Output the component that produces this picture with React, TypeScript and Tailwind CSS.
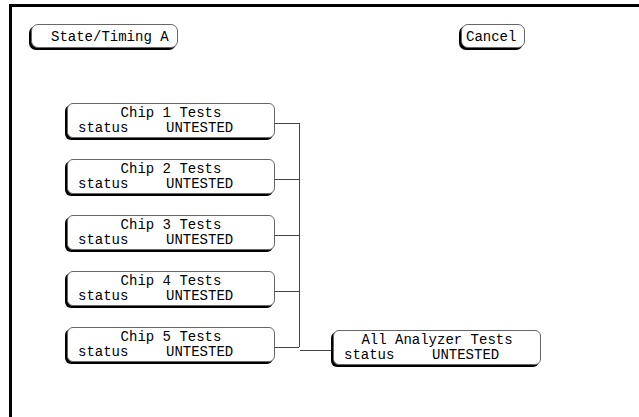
const chips = [1, 2, 3, 4, 5];

function TestBox({ title }: { title: string }) {
    return (
        <div className="w-[208px] h-[35px] shrink-0 rounded-[6px] border border-[#666] bg-white shadow-[-2px_2px_0_0_#000] pt-[2px] leading-[15px] text-[14px] text-black">
            <div className="text-center whitespace-pre">{title}</div>
            <div className="flex pl-[10px]">
                <span className="w-[88px]">status</span>
                <span>UNTESTED</span>
            </div>
        </div>
    );
}

export default function App() {
    return (
        <div
            className="w-[639px] h-[417px] bg-white pt-[4px] pl-[9px] flex flex-col overflow-hidden"
            style={{ fontFamily: '"Liberation Mono", "DejaVu Sans Mono", monospace' }}
        >
            <div className="flex-1 border-t-[3px] border-l-[3px] border-black">
                {/* top buttons */}
                <div className="flex items-start mt-[17px]">
                    <button className="ml-[19px] w-[147px] h-[24px] rounded-[7px] border border-[#666] bg-white shadow-[-2px_2px_0_0_#000] pl-[19px] text-left text-[14px] leading-[24px] text-black">
                        State/Timing A
                    </button>
                    <button className="ml-[283px] w-[64px] h-[24px] rounded-[7px] border border-[#666] bg-white shadow-[-2px_2px_0_0_#000] pl-[4px] text-left text-[14px] leading-[24px] text-black">
                        Cancel
                    </button>
                </div>

                {/* test tree */}
                <div className="flex mt-[55px] ml-[55px]">
                    <div className="flex flex-col gap-[21px]">
                        {chips.map((n) => (
                            <div key={n} className="flex items-center">
                                <TestBox title={`Chip ${n} Tests`} />
                                <div className="w-[24px] h-px bg-[#444] mt-[5px]" />
                            </div>
                        ))}
                    </div>
                    <div className="w-px bg-[#444] mt-[20px] mb-[15px]" />
                    <div className="self-end flex items-center mb-[-3px]">
                        <div className="w-[33px] h-px bg-[#444] mt-[5px]" />
                        <TestBox title="All Analyzer Tests" />
                    </div>
                </div>
            </div>
        </div>
    );
}
